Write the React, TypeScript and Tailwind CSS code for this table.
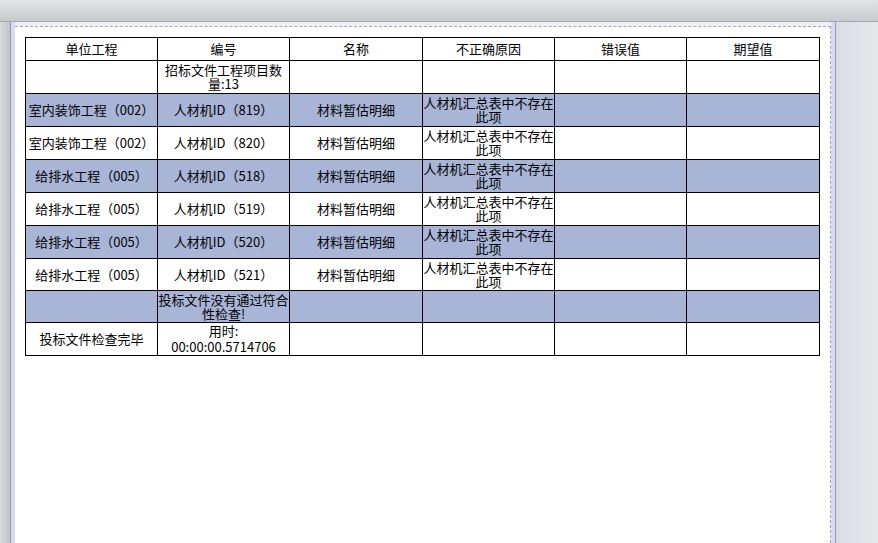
import React from 'react'

type Row = { unit: string; code: string; name: string; reason: string; blue: boolean; h: string }

const rows: Row[] = [
    { unit: '', code: '招标文件工程项目数量:13', name: '', reason: '', blue: false, h: 'h-[33px]' },
    { unit: '室内装饰工程（002）', code: '人材机ID（819）', name: '材料暂估明细', reason: '人材机汇总表中不存在此项', blue: true, h: 'h-[33px]' },
    { unit: '室内装饰工程（002）', code: '人材机ID（820）', name: '材料暂估明细', reason: '人材机汇总表中不存在此项', blue: false, h: 'h-[33px]' },
    { unit: '给排水工程（005）', code: '人材机ID（518）', name: '材料暂估明细', reason: '人材机汇总表中不存在此项', blue: true, h: 'h-[33px]' },
    { unit: '给排水工程（005）', code: '人材机ID（519）', name: '材料暂估明细', reason: '人材机汇总表中不存在此项', blue: false, h: 'h-[33px]' },
    { unit: '给排水工程（005）', code: '人材机ID（520）', name: '材料暂估明细', reason: '人材机汇总表中不存在此项', blue: true, h: 'h-[33px]' },
    { unit: '给排水工程（005）', code: '人材机ID（521）', name: '材料暂估明细', reason: '人材机汇总表中不存在此项', blue: false, h: 'h-[32px]' },
    { unit: '', code: '投标文件没有通过符合性检查!', name: '', reason: '', blue: true, h: 'h-[32px]' },
]

const headers = ['单位工程', '编号', '名称', '不正确原因', '错误值', '期望值']

const cell = 'border border-black text-center align-middle p-0 leading-[14px] break-all'

export default function App() {
    return (
        <div
            className="w-[878px] h-[543px] overflow-hidden flex flex-col bg-[#e4e5ea] text-black text-[13px]"
            style={{ fontFamily: '"Noto Sans CJK SC", "Liberation Sans", sans-serif' }}
        >
            {/* ribbon strip */}
            <div className="h-[22px] shrink-0 bg-gradient-to-b from-[#e3e4e7] to-[#c9cace] border-b border-[#a6a7ab]" />

            <div className="flex flex-1 min-h-0">
                <div className="w-[10px] shrink-0 bg-gradient-to-r from-[#dadbdf] to-[#c3c4c9] border-r border-[#9c9da3] box-content" />
                <div className="w-[4px] shrink-0 bg-[#d3dbf7]" />

                <div className="w-[816px] shrink-0 flex flex-col bg-[#eef0f9]">
                    <div className="h-[4px] shrink-0" />
                    <div className="flex-1 bg-white border-t border-r border-dashed border-[#a5a5ad] pl-[10px] pt-[10px]">
                        <table className="border-collapse table-fixed w-[795px]">
                            <colgroup>
                                <col className="w-[132px]" />
                                <col className="w-[132px]" />
                                <col className="w-[133px]" />
                                <col className="w-[132px]" />
                                <col className="w-[132px]" />
                                <col className="w-[133px]" />
                            </colgroup>
                            <thead>
                                <tr className="h-[23px]">
                                    {headers.map(h => (
                                        <th key={h} className={`${cell} font-normal`}>{h}</th>
                                    ))}
                                </tr>
                            </thead>
                            <tbody>
                                {rows.map((r, i) => (
                                    <tr key={i} className={`${r.h} ${r.blue ? 'bg-[#a8b5d7]' : 'bg-white'}`}>
                                        <td className={cell}>{r.unit}</td>
                                        <td className={cell}>{r.code}</td>
                                        <td className={cell}>{r.name}</td>
                                        <td className={cell}>{r.reason}</td>
                                        <td className={cell}></td>
                                        <td className={cell}></td>
                                    </tr>
                                ))}
                                <tr className="h-[32px] bg-white">
                                    <td className={cell}>投标文件检查完毕</td>
                                    <td className="border border-black text-center align-middle p-0 leading-[16px]">用时: 00:00:00.5714706</td>
                                    <td className={cell}></td>
                                    <td className={cell}></td>
                                    <td className={cell}></td>
                                    <td className={cell}></td>
                                </tr>
                            </tbody>
                        </table>
                    </div>
                </div>

                <div className="w-[4px] shrink-0 bg-[#d3dbf7] border-r border-[#9c9da3] box-content" />
                <div className="flex-1 bg-gradient-to-r from-[#dcdde2] to-[#e6e7eb]" />
            </div>
        </div>
    )
}
